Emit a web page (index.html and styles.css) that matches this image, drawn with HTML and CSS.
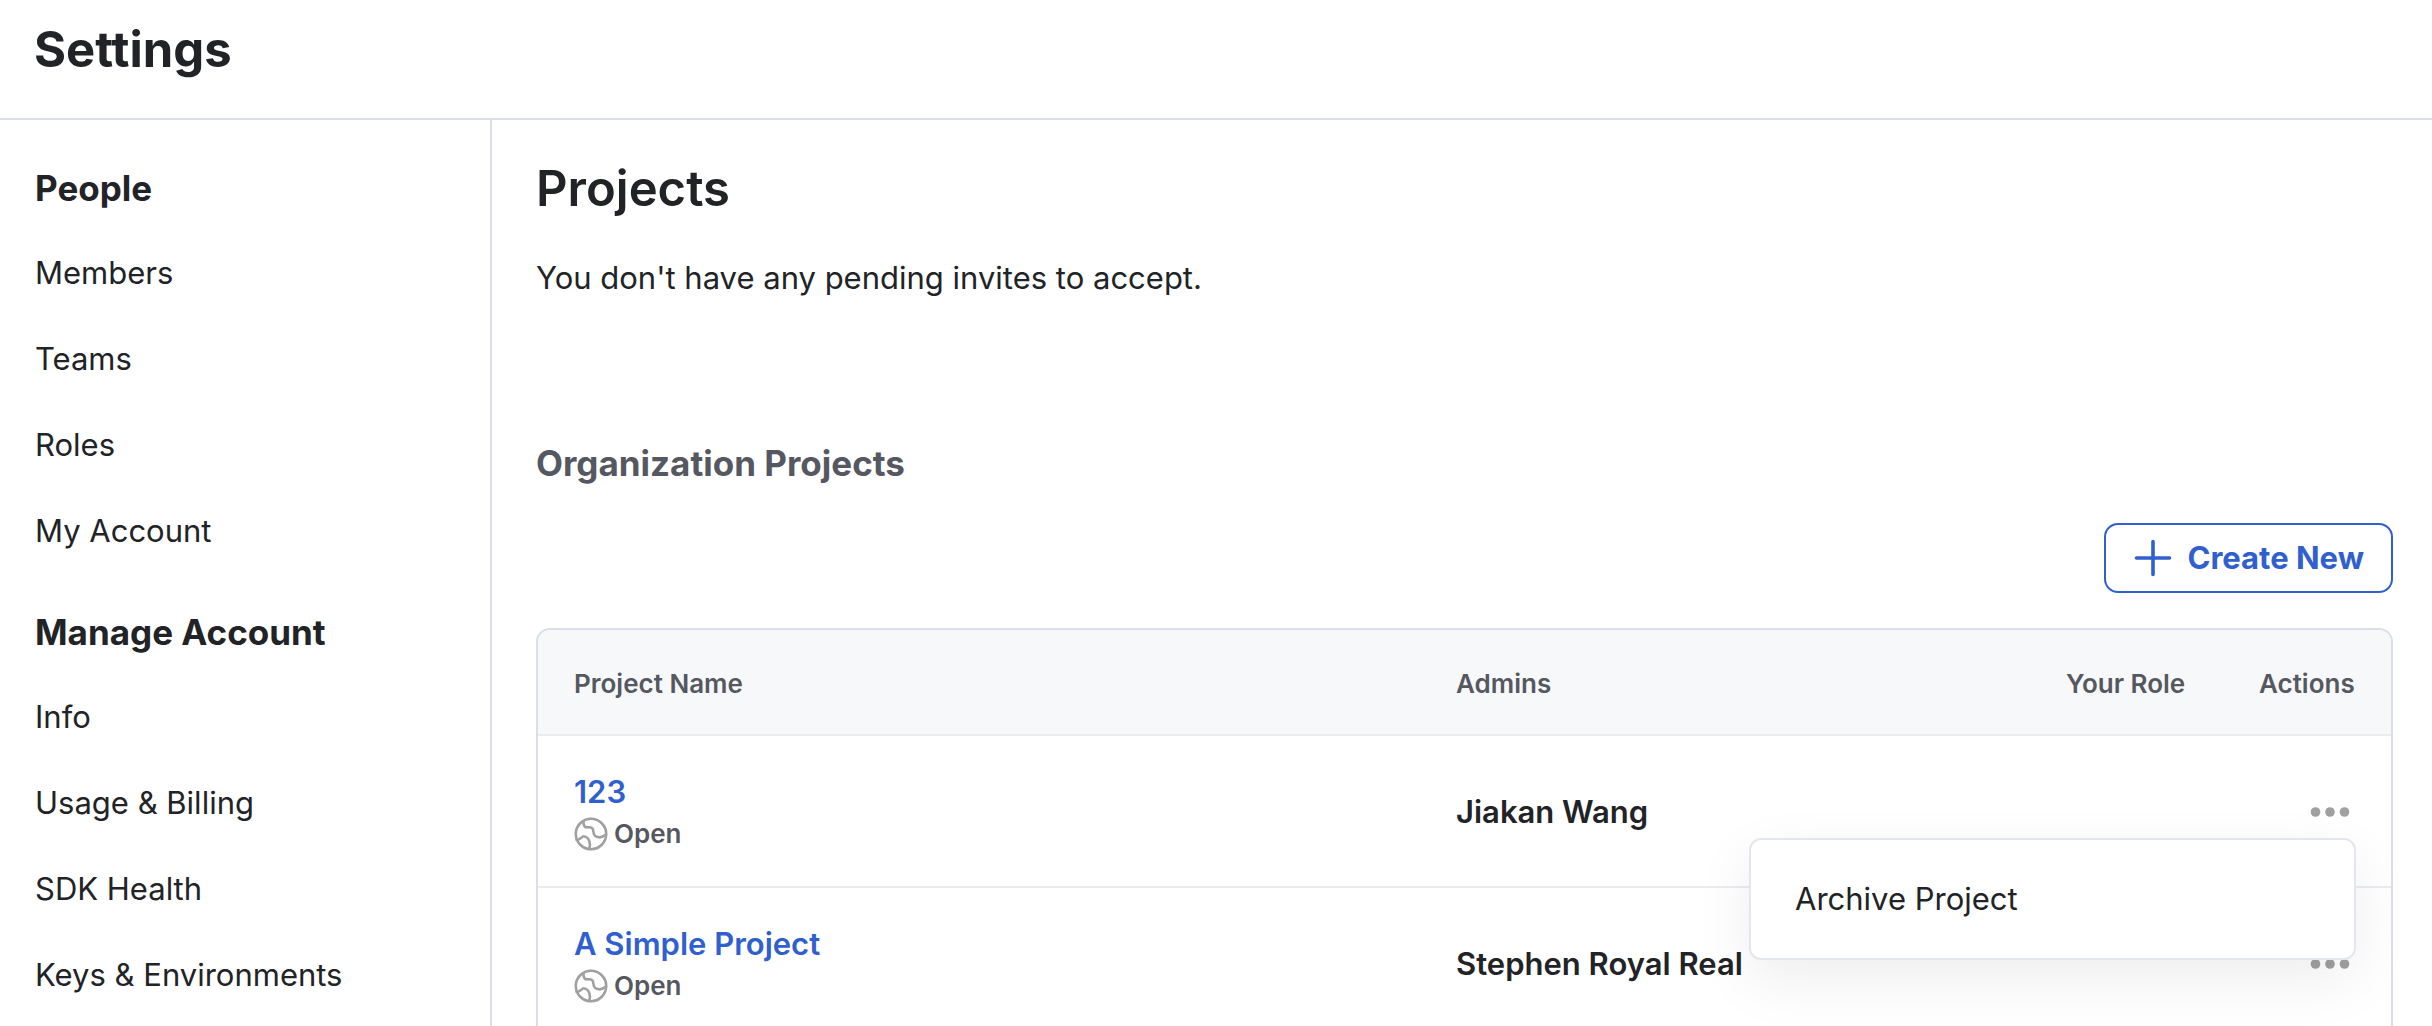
FILE: index.html
```html
<!DOCTYPE html>
<html lang="en">
<head>
    <meta charset="UTF-8">
    <title>Settings - Projects</title>
    <link rel="stylesheet" href="styles.css">
</head>
<body>
    <svg class="sprite" aria-hidden="true">
        <symbol id="globe" viewBox="0 0 34 34">
            <g fill="none" stroke="currentColor" stroke-width="2.6" stroke-linecap="round" stroke-linejoin="round">
                <circle cx="17" cy="17" r="15.2"/>
                <path d="M9.6 4.4C9.2 7.6 10.2 10.4 13 10.4C15.4 10.4 17.4 9.6 18.6 11.6C20 14 18.6 17 21.2 19C24.4 21 28.6 20.4 32 17.6"/>
                <path d="M2.6 22.8C6 23.2 6.6 20.4 8.8 19.6C11.6 18.8 14.4 21.2 15.4 24.4C16.2 26.8 16 29.4 15.4 32"/>
            </g>
        </symbol>
        <symbol id="dots" viewBox="0 0 52 52">
            <circle cx="11.5" cy="26" r="4.8" fill="currentColor"/>
            <circle cx="26" cy="26" r="4.8" fill="currentColor"/>
            <circle cx="40.5" cy="26" r="4.8" fill="currentColor"/>
        </symbol>
    </svg>

    <div class="app">
        <header class="topbar">
            <h1>Settings</h1>
        </header>

        <div class="layout">
            <nav class="sidebar">
                <h2>People</h2>
                <ul>
                    <li><a href="#members">Members</a></li>
                    <li><a href="#teams">Teams</a></li>
                    <li><a href="#roles">Roles</a></li>
                    <li><a href="#my-account">My Account</a></li>
                </ul>
                <h2>Manage Account</h2>
                <ul>
                    <li><a href="#info">Info</a></li>
                    <li><a href="#billing">Usage &amp; Billing</a></li>
                    <li><a href="#sdk-health">SDK Health</a></li>
                    <li><a href="#keys">Keys &amp; Environments</a></li>
                </ul>
            </nav>

            <main class="content">
                <h2 class="page-title">Projects</h2>
                <p class="invites">You don't have any pending invites to accept.</p>

                <h3 class="section-title">Organization Projects</h3>

                <div class="toolbar">
                    <button type="button" class="btn-create">
                        <svg viewBox="0 0 40 40" width="40" height="40" aria-hidden="true">
                            <path d="M20 3.5v33M3.5 20h33" fill="none" stroke="currentColor" stroke-width="3.6" stroke-linecap="round"/>
                        </svg>
                        Create New
                    </button>
                </div>

                <table class="projects">
                    <thead>
                        <tr>
                            <th class="col-name">Project Name</th>
                            <th>Admins</th>
                            <th class="col-role">Your Role</th>
                            <th class="col-actions">Actions</th>
                        </tr>
                    </thead>
                    <tbody>
                        <tr>
                            <td class="name-cell">
                                <a class="project-link" href="#123">123</a>
                                <div class="access"><svg class="globe"><use href="#globe"/></svg>Open</div>
                            </td>
                            <td>Jiakan Wang</td>
                            <td></td>
                            <td>
                                <div class="actions">
                                    <button type="button" class="btn-more" aria-label="Actions for 123" aria-expanded="true">
                                        <svg><use href="#dots"/></svg>
                                    </button>
                                    <div class="menu">
                                        <button type="button">Archive Project</button>
                                    </div>
                                </div>
                            </td>
                        </tr>
                        <tr>
                            <td class="name-cell">
                                <a class="project-link" href="#simple">A Simple Project</a>
                                <div class="access"><svg class="globe"><use href="#globe"/></svg>Open</div>
                            </td>
                            <td>Stephen Royal Real</td>
                            <td></td>
                            <td>
                                <div class="actions">
                                    <button type="button" class="btn-more" aria-label="Actions for A Simple Project">
                                        <svg><use href="#dots"/></svg>
                                    </button>
                                </div>
                            </td>
                        </tr>
                    </tbody>
                </table>
            </main>
        </div>
    </div>
</body>
</html>
```
FILE: styles.css
```css
:root {
    --text: #212327;
    --muted: #555861;
    --primary: #3060cf;
    --border: #dbdee6;
    --row-border: #ebecef;
    --icon: #a0a0a0;
}

* {
    box-sizing: border-box;
}

body {
    margin: 0;
    font-family: Inter, sans-serif;
    font-size: 31px;
    line-height: 40px;
    font-optical-sizing: none;
    color: var(--text);
    background: #fff;
}

h1, h2, h3, p, ul {
    margin: 0;
    padding: 0;
}

ul {
    list-style: none;
}

button {
    font: inherit;
    cursor: pointer;
}

.sprite {
    display: none;
}

.app {
    display: flex;
    flex-direction: column;
    height: 100vh;
    overflow: hidden;
}

.topbar {
    padding: 20px 34px 38px;
    border-bottom: 2px solid var(--border);
}

.topbar h1 {
    font-size: 49px;
    line-height: 60px;
    font-weight: 700;
}

.layout {
    display: flex;
    flex: 1;
    min-height: 0;
}

.sidebar {
    flex: 0 0 492px;
    padding: 46px 35px;
    border-right: 2px solid var(--border);
    overflow: hidden;
}

.sidebar h2 {
    font-size: 35px;
    line-height: 44px;
    font-weight: 700;
    margin-bottom: 20px;
}

.sidebar li {
    padding: 23px 0;
}

.sidebar ul + h2 {
    margin-top: 36px;
}

.sidebar a {
    display: block;
    color: inherit;
    text-decoration: none;
}

/* Main content */
.content {
    flex: 1;
    min-width: 0;
    padding: 39px 39px 0 44px;
}

.page-title {
    font-size: 49px;
    line-height: 60px;
    font-weight: 600;
}

.invites {
    margin-top: 39px;
}

.section-title {
    margin-top: 143px;
    font-size: 35px;
    line-height: 44px;
    font-weight: 700;
    color: var(--muted);
}

.toolbar {
    display: flex;
    justify-content: flex-end;
    margin: 38px 0 35px;
}

.btn-create {
    display: flex;
    align-items: center;
    gap: 15px;
    height: 70px;
    padding: 0 27px;
    border: 2px solid var(--primary);
    border-radius: 14px;
    background: #fff;
    color: var(--primary);
    font-weight: 700;
}

/* Projects table */
.projects {
    width: 100%;
    table-layout: fixed;
    border: 2px solid var(--border);
    border-radius: 14px;
    border-collapse: separate;
    border-spacing: 0;
}

.projects th {
    padding: 34px 35px 30px 36px;
    border-bottom: 2px solid var(--row-border);
    background: #f6f8fa;
    color: var(--muted);
    font-size: 26px;
    font-weight: 600;
    text-align: left;
    white-space: nowrap;
}

.projects th:first-child {
    border-top-left-radius: 12px;
}

.projects th:last-child {
    border-top-right-radius: 12px;
}

.projects td {
    height: 152px;
    padding: 2px 35px 0 36px;
    border-bottom: 2px solid var(--row-border);
    font-weight: 600;
}

.projects .name-cell {
    padding-top: 6px;
}

.col-name {
    width: 47.6%;
}

.col-role {
    width: 193px;
}

.col-actions {
    width: 168px;
}

.project-link {
    color: var(--primary);
    text-decoration: none;
}

.access {
    display: flex;
    align-items: center;
    gap: 6px;
    color: var(--muted);
    font-size: 26px;
    line-height: 44px;
}

.globe {
    width: 34px;
    height: 34px;
    color: var(--icon);
}

.actions {
    position: relative;
    display: flex;
    justify-content: flex-end;
}

.btn-more {
    width: 52px;
    height: 52px;
    padding: 0;
    border: none;
    background: none;
    color: var(--icon);
}

.btn-more svg {
    display: block;
    width: 52px;
    height: 52px;
}

.menu {
    position: absolute;
    top: 100%;
    right: 0;
    z-index: 1;
    width: 607px;
    padding: 19px 0;
    border: 2px solid #e3e6ec;
    border-radius: 12px;
    background: #fff;
    box-shadow: 0 20px 60px rgba(0, 0, 0, 0.07);
}

.menu button {
    display: block;
    width: 100%;
    padding: 20px 44px;
    border: none;
    background: none;
    color: inherit;
    font-weight: 400;
    text-align: left;
}
```
